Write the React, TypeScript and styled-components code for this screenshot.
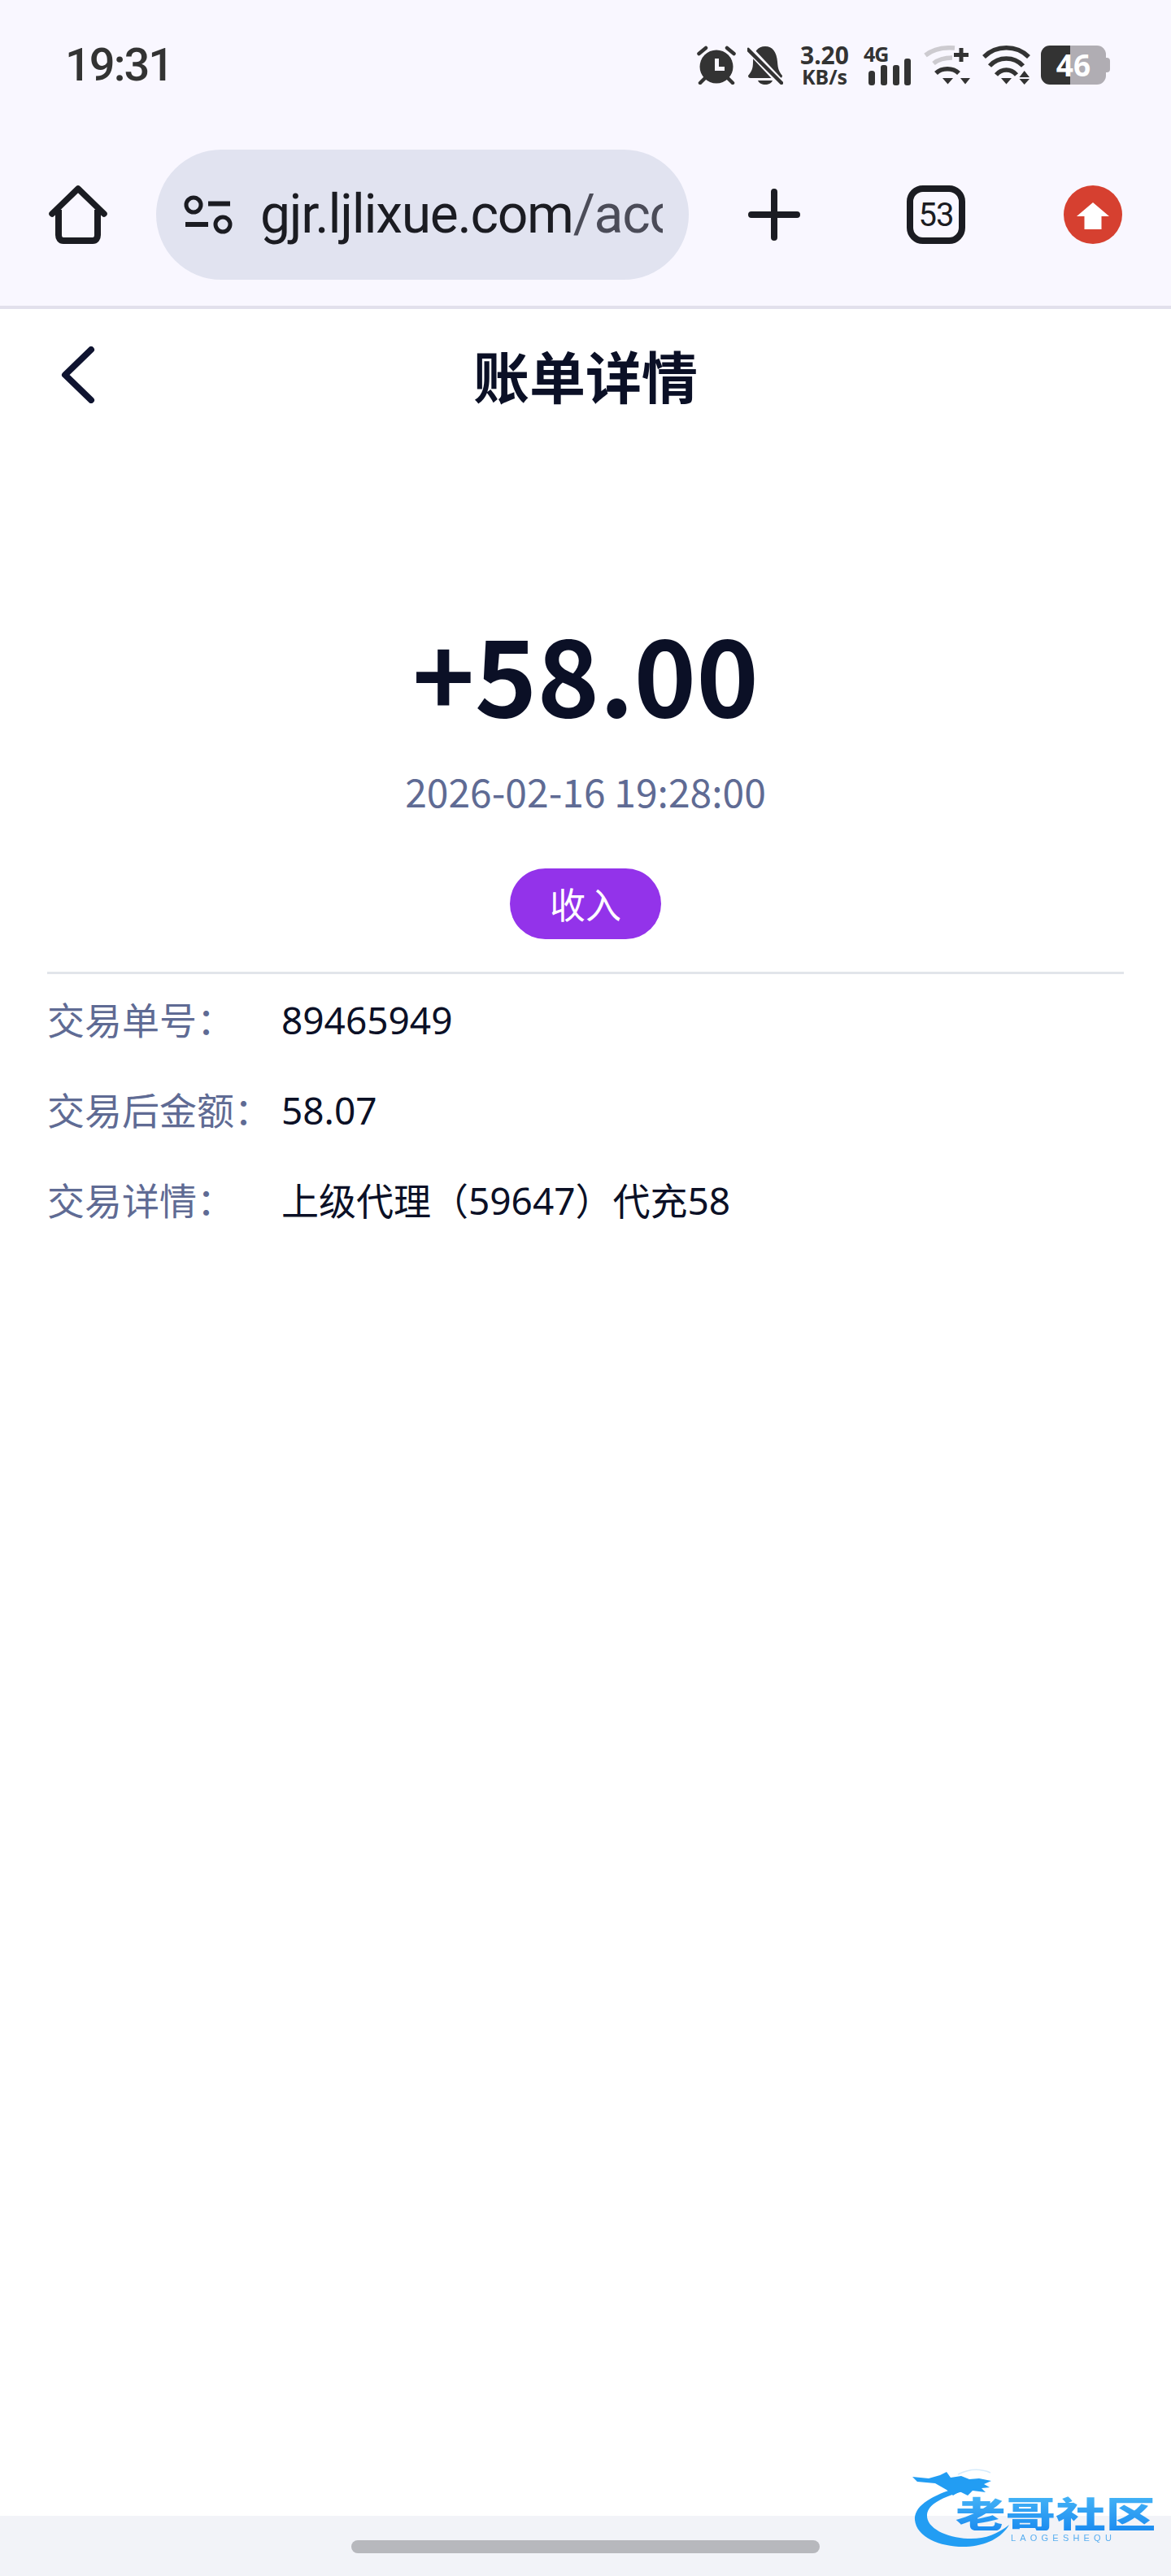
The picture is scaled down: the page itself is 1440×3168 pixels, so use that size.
import styled, { createGlobalStyle } from "styled-components";

const GlobalStyle = createGlobalStyle`
  html, body {
    margin: 0;
    padding: 0;
    background: #ffffff;
  }
  * {
    box-sizing: border-box;
  }
`;

const Screen = styled.div`
  width: 1440px;
  height: 3168px;
  display: flex;
  flex-direction: column;
  position: relative;
  overflow: hidden;
  font-family: "Noto Sans CJK SC", "Noto Sans", sans-serif;
`;

const BrowserChrome = styled.header`
  background: #f9f7ff;
  border-bottom: 4px solid #e2e0ec;
  height: 380px;
  flex-shrink: 0;
`;

const StatusBar = styled.div`
  height: 160px;
  padding: 0 80px;
  display: flex;
  justify-content: space-between;
  align-items: center;
  color: #333333;
`;

const Clock = styled.span`
  font-family: Roboto, sans-serif;
  font-size: 56px;
  font-weight: 500;
  letter-spacing: -2px;
  line-height: 1;
`;

const StatusIcons = styled.div`
  display: flex;
  align-items: center;
  height: 50px;
`;

const StatusIcon = styled.svg<{ $gap: number }>`
  display: block;
  margin-left: ${(p) => p.$gap}px;
  flex-shrink: 0;
`;

const Speed = styled.div`
  width: 60px;
  margin-left: 21px;
  display: flex;
  flex-direction: column;
  align-items: center;
  font-family: "Noto Sans", sans-serif;
  font-weight: 700;
`;

const SpeedValue = styled.span`
  font-size: 30px;
  line-height: 28px;
`;

const SpeedUnit = styled.span`
  font-size: 25px;
  line-height: 24px;
`;

const Network = styled.div`
  margin-left: 21px;
  width: 56px;
  display: flex;
  flex-direction: column;
  font-family: "Noto Sans", sans-serif;
  font-weight: 700;
`;

const NetworkLabel = styled.span`
  font-size: 25px;
  line-height: 20px;
  letter-spacing: -1px;
  margin-left: -3px;
`;

const NetworkBars = styled.svg`
  display: block;
  margin-top: -4px;
`;

const Battery = styled.div`
  margin-left: 13px;
  width: 80px;
  height: 48px;
  border-radius: 11px;
  background: linear-gradient(90deg, #333333 36px, #b0adb3 36px);
  color: #ffffff;
  font-family: "Noto Sans", sans-serif;
  font-size: 37px;
  font-weight: 700;
  line-height: 48px;
  text-align: center;
  position: relative;

  &::after {
    content: "";
    position: absolute;
    right: -5px;
    top: 15px;
    width: 5px;
    height: 18px;
    border-radius: 0 4px 4px 0;
    background: #b0adb3;
  }
`;

const Toolbar = styled.div`
  height: 216px;
  padding-top: 24px;
  display: grid;
  grid-template-columns: 192px 655px 210px 188px 1fr;
  align-items: start;
`;

const ToolSlot = styled.div<{ $nudge?: number }>`
  height: 160px;
  display: flex;
  align-items: center;
  justify-content: center;
  padding-left: ${(p) => p.$nudge ?? 0}px;
`;

const AddressPill = styled.div`
  height: 160px;
  border-radius: 80px;
  background: #e1e3f0;
  padding: 0 32px 0 34px;
  display: flex;
  align-items: center;
  gap: 34px;
`;

const SiteIcon = styled.svg`
  flex-shrink: 0;
`;

const AddressText = styled.div`
  flex: 1;
  min-width: 0;
  overflow: hidden;
  white-space: nowrap;
  font-family: Roboto, sans-serif;
  font-size: 66px;
  line-height: 80px;
  letter-spacing: -1.3px;
  color: #1b1c22;

  span {
    color: #4b4c58;
  }
`;

const TabCounter = styled.div`
  width: 72px;
  height: 72px;
  border: 8px solid #1b1c22;
  border-radius: 20px;
  display: flex;
  align-items: center;
  justify-content: center;
  font-family: Roboto, sans-serif;
  font-size: 40px;
  letter-spacing: -1px;
  color: #1b1c22;
`;

const Main = styled.main`
  flex: 1;
  background: #ffffff;
  display: flex;
  flex-direction: column;
  justify-content: space-between;
`;

const PageHeader = styled.div`
  height: 162px;
  display: flex;
  align-items: center;
  justify-content: center;
  position: relative;
`;

const BackIcon = styled.svg`
  display: block;
  position: absolute;
  left: 74px;
  top: 46px;
`;

const PageTitle = styled.h1`
  margin: 0;
  font-size: 69px;
  font-weight: 700;
  line-height: 84px;
  color: #0b1026;
`;

const Summary = styled.section`
  padding-top: 198px;
  display: flex;
  flex-direction: column;
  align-items: center;
`;

const Amount = styled.div`
  font-size: 130px;
  font-weight: 700;
  line-height: 170px;
  color: #0b1026;
`;

const TradeTime = styled.div`
  margin-top: 32px;
  font-size: 48px;
  line-height: 60px;
  color: #5f6b94;
`;

const TypeBadge = styled.div`
  margin-top: 66px;
  width: 186px;
  height: 87px;
  border-radius: 44px;
  background: #9333ea;
  color: #ffffff;
  font-size: 44px;
  line-height: 87px;
  text-align: center;
`;

const DetailList = styled.dl`
  margin: 40px 58px 0;
  padding-top: 26px;
  border-top: 3px solid #e2e5ea;
`;

const DetailRow = styled.div`
  display: grid;
  grid-template-columns: 288px 1fr;
  height: 111px;
  font-family: "Noto Sans", "Noto Sans CJK SC", sans-serif;
  font-size: 46px;
  line-height: 60px;
`;

const DetailLabel = styled.dt`
  color: #5f6b94;
`;

const DetailValue = styled.dd`
  margin: 0;
  color: #0b1026;
`;

const BottomBar = styled.div`
  height: 74px;
  flex-shrink: 0;
  background: #f2f3f8;
  padding-top: 30px;
  display: flex;
  justify-content: center;
`;

const HomeHandle = styled.div`
  width: 576px;
  height: 16px;
  border-radius: 8px;
  background: #b7b8bd;
`;

const Watermark = styled.div`
  position: absolute;
  left: 1122px;
  top: 3033px;
  width: 296px;
  height: 100px;
  filter: blur(0.7px);
`;

const WatermarkDragon = styled.svg`
  display: block;
  position: absolute;
  left: 0;
  top: 0;
`;

const WatermarkName = styled.div`
  position: absolute;
  left: 53px;
  top: 35px;
  width: 176px;
  font-size: 44px;
  font-weight: 900;
  line-height: 44px;
  white-space: nowrap;
  transform: scaleX(1.4);
  transform-origin: left center;
  background: linear-gradient(180deg, #45b4f6, #1c8cf0);
  -webkit-background-clip: text;
  background-clip: text;
  color: transparent;
`;

const WatermarkLatin = styled.div`
  position: absolute;
  left: 121px;
  top: 82px;
  font-family: "Liberation Sans", sans-serif;
  font-size: 11px;
  line-height: 13px;
  letter-spacing: 5.2px;
  color: #58aef0;
  white-space: nowrap;
`;

const details = [
  { label: "交易单号：", value: "89465949" },
  { label: "交易后金额：", value: "58.07" },
  { label: "交易详情：", value: "上级代理（59647）代充58" },
];

const App = () => {
  return (
    <Screen>
      <GlobalStyle />
      <BrowserChrome>
        <StatusBar>
          <Clock>19:31</Clock>
          <StatusIcons>
            <StatusIcon $gap={0} width="48" height="48" viewBox="0 0 48 48">
              <circle cx="24" cy="26" r="20.5" fill="#333" />
              <path d="M24.5 16V28.5H34" fill="none" stroke="#f9f7ff" strokeWidth="5" />
              <path d="M2.5 10L11 3M45.5 10L37 3M4 46L10 40M44 46L38 40" fill="none" stroke="#333" strokeWidth="4.5" strokeLinecap="round" />
            </StatusIcon>
            <StatusIcon $gap={14} width="44" height="48" viewBox="0 0 44 48">
              <path d="M1 37C5 32 7 29 7 20C7 8 13 1 22 1C31 1 36 8 37 20C37.6 29 39 32 43 37C43 39 42 40 40 40H4C2 40 1 39 1 37Z" fill="#333" />
              <path d="M13 43H31C30 46 26 48 22 48C18 48 14 46 13 43Z" fill="#333" />
              <path d="M-1 1L44 49" stroke="#f9f7ff" strokeWidth="9" />
              <path d="M1 5L42 46" stroke="#333" strokeWidth="4.5" strokeLinecap="round" />
            </StatusIcon>
            <Speed>
              <SpeedValue>3.20</SpeedValue>
              <SpeedUnit>KB/s</SpeedUnit>
            </Speed>
            <Network>
              <NetworkLabel>4G</NetworkLabel>
              <NetworkBars width="56" height="33" viewBox="0 0 56 33">
                <rect x="3" y="15" width="8" height="18" rx="3.5" fill="#333" />
                <rect x="18" y="8" width="8" height="25" rx="3" fill="#333" />
                <rect x="33" y="8" width="8" height="25" rx="3" fill="#333" />
                <rect x="47" y="0" width="8" height="33" rx="3" fill="#333" />
              </NetworkBars>
            </Network>
            <StatusIcon $gap={15} width="58" height="49" viewBox="0 0 58 49">
              <path d="M2 12C12 4 26 2 38 3M12 22C18 17 25 15 35 15" fill="none" stroke="#cdcbd0" strokeWidth="5.5" />
              <path d="M15 34C22 27 36 27 43 34" fill="none" stroke="#333" strokeWidth="5.5" />
              <path d="M23 40H36L29.5 47.5ZM45 40H57L51 47.5Z" fill="#333" />
              <path d="M46 3V20M37 11.5H55" stroke="#333" strokeWidth="5" />
            </StatusIcon>
            <StatusIcon $gap={14} width="59" height="49" viewBox="0 0 59 49">
              <path d="M2 14C17 -1 42 -1 57 14M9 25C20 13 39 13 50 25M17 36C24 28 35 28 42 36" fill="none" stroke="#333" strokeWidth="5.5" />
              <path d="M23 40H36L29.5 47.5ZM45.5 39H58L51.7 31ZM45.5 41H58L51.7 48Z" fill="#333" />
            </StatusIcon>
            <Battery>46</Battery>
          </StatusIcons>
        </StatusBar>
        <Toolbar>
          <ToolSlot>
            <svg width="72" height="72" viewBox="0 0 72 72">
              <path d="M4 35L36 4L68 35" fill="none" stroke="#1b1c22" strokeWidth="7.5" strokeLinecap="round" strokeLinejoin="round" />
              <path d="M12 30V61C12 65 14 68 18 68H54C58 68 60 65 60 61V30" fill="none" stroke="#1b1c22" strokeWidth="8" />
            </svg>
          </ToolSlot>
          <AddressPill>
            <SiteIcon width="60" height="52" viewBox="0 0 60 52">
              <circle cx="12" cy="14" r="9" fill="none" stroke="#1b1c22" strokeWidth="5" />
              <circle cx="48" cy="38" r="9" fill="none" stroke="#1b1c22" strokeWidth="5" />
              <path d="M30 12.5H57M2 38H30" stroke="#1b1c22" strokeWidth="6" />
            </SiteIcon>
            <AddressText>
              gjr.ljlixue.com<span>/account</span>
            </AddressText>
          </AddressPill>
          <ToolSlot>
            <svg width="64" height="64" viewBox="0 0 64 64">
              <path d="M4 32H60M32 4V60" stroke="#1b1c22" strokeWidth="8" strokeLinecap="round" />
            </svg>
          </ToolSlot>
          <ToolSlot>
            <TabCounter>53</TabCounter>
          </ToolSlot>
          <ToolSlot $nudge={3}>
            <svg width="72" height="72" viewBox="0 0 72 72">
              <circle cx="36" cy="36" r="36" fill="#d64030" />
              <path d="M36 21L56 38H46.5V54H25.5V38H16Z" fill="#ffffff" />
            </svg>
          </ToolSlot>
        </Toolbar>
      </BrowserChrome>
      <Main>
        <div>
          <PageHeader>
            <BackIcon width="44" height="70" viewBox="0 0 44 70">
              <path d="M38 4L6 35L38 66" fill="none" stroke="#0f1430" strokeWidth="8" strokeLinecap="round" strokeLinejoin="round" />
            </BackIcon>
            <PageTitle>账单详情</PageTitle>
          </PageHeader>
          <Summary>
            <Amount>+58.00</Amount>
            <TradeTime>2026-02-16 19:28:00</TradeTime>
            <TypeBadge>收入</TypeBadge>
          </Summary>
          <DetailList>
            {details.map((row) => (
              <DetailRow key={row.label}>
                <DetailLabel>{row.label}</DetailLabel>
                <DetailValue>{row.value}</DetailValue>
              </DetailRow>
            ))}
          </DetailList>
        </div>
        <BottomBar>
          <HomeHandle />
        </BottomBar>
      </Main>
      <Watermark>
        <WatermarkDragon width="296" height="100" viewBox="0 0 296 100">
          <path d="M50 28C20 38 2 50 3 66C5 88 36 100 66 99C90 98 110 88 119 72C104 84 88 90 68 89C42 88 17 76 18 60C19 46 38 38 62 31Z" fill="#229df3" />
          <path d="M0 13L20 15L34 11L42 7L47 14L60 12L70 16L82 15L97 18L88 22L95 26L85 27L90 32L74 30L68 36L58 31L50 36L42 29L28 21L6 19Z" fill="#229df3" />
          <path d="M56 10C68 4 82 2 96 8" fill="none" stroke="#d6ebfb" strokeWidth="1.5" />
        </WatermarkDragon>
        <WatermarkName>老哥社区</WatermarkName>
        <WatermarkLatin>LAOGESHEQU</WatermarkLatin>
      </Watermark>
    </Screen>
  );
};

export default App;
